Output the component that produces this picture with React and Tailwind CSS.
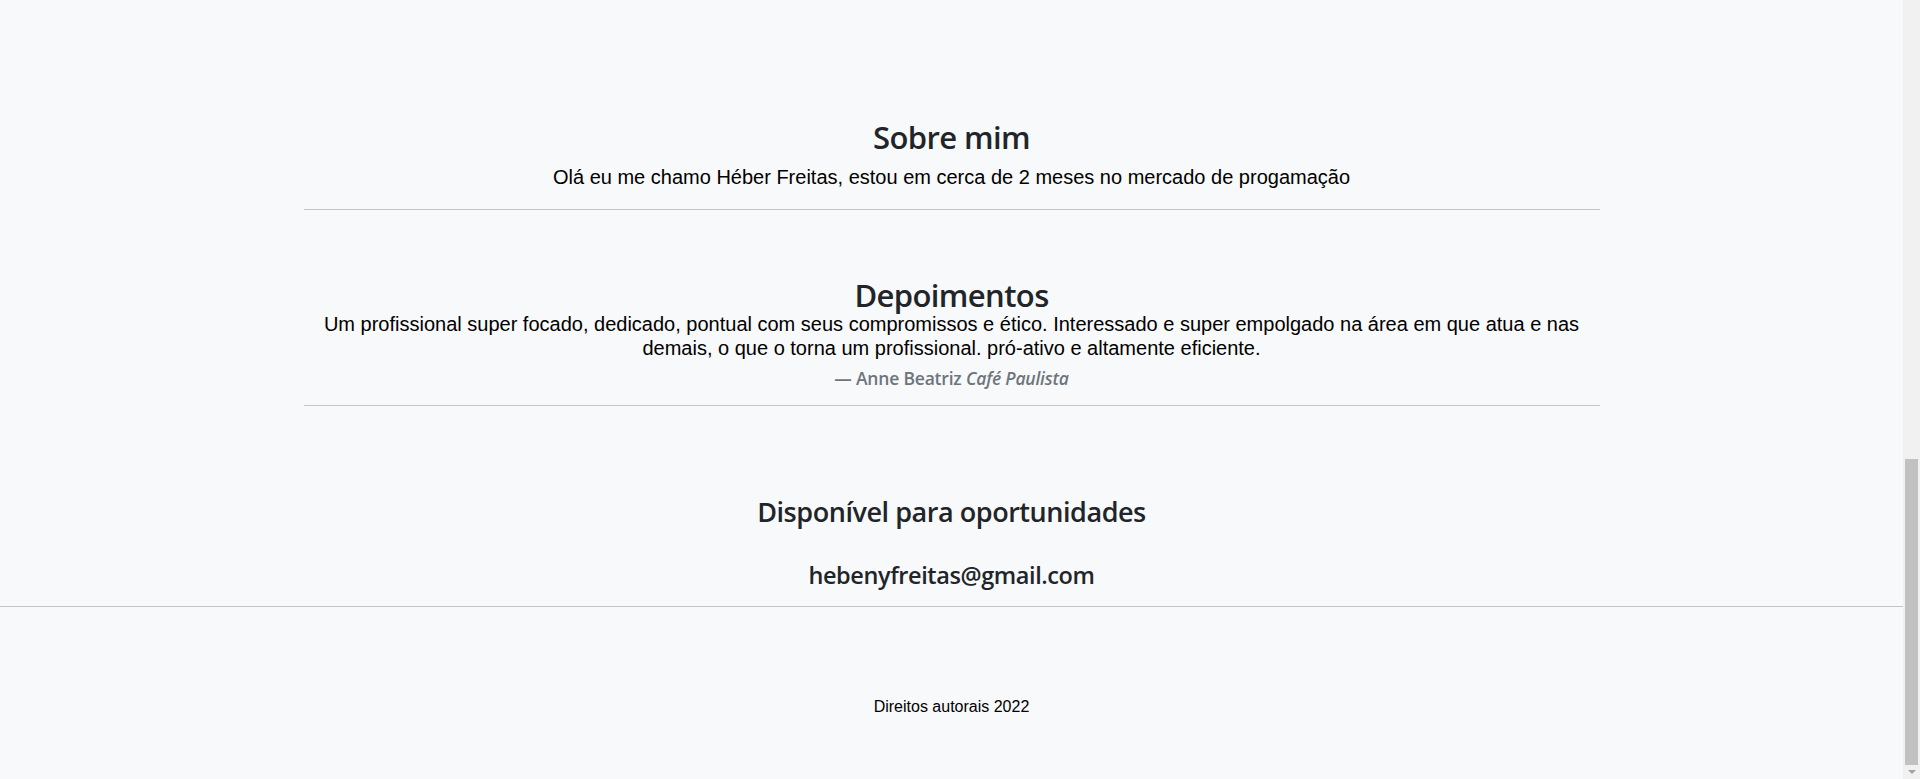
import React from "react";

const heading = "font-['Open_Sans','Noto_Sans',sans-serif] font-semibold text-[#212529] text-center";
const body = "font-['Liberation_Sans',Arial,sans-serif] text-black text-center";

const Divider = ({ full }) => (
  <div className={full ? "h-px bg-[#c4c5c7]" : "mx-auto h-px w-[1296px] bg-[#c4c5c7]"} />
);

const About = () => (
  <section className="mx-auto w-[1296px]">
    <h2 className={`${heading} text-[31px] leading-[38.4px] tracking-[-0.6px]`}>Sobre mim</h2>
    <p className={`${body} mt-[9px] text-[20px] leading-[24px]`}>
      Olá eu me chamo Héber Freitas, estou em cerca de 2 meses no mercado de progamação
    </p>
  </section>
);

const Testimonials = () => (
  <section className="mx-auto w-[1296px]">
    <h2 className={`${heading} mb-[-3px] text-[31px] leading-[38.4px] tracking-[-0.6px]`}>Depoimentos</h2>
    <figure>
      <blockquote className={`${body} text-[20px] leading-[24px]`}>
        Um profissional super focado, dedicado, pontual com seus compromissos e ético. Interessado e super
        empolgado na área em que atua e nas demais, o que o torna um profissional. pró-ativo e altamente eficiente.
      </blockquote>
      <figcaption className="mt-[8px] text-center font-['Open_Sans','Noto_Sans',sans-serif] text-[17.5px] font-semibold leading-[21px] tracking-[-0.2px] text-[#6c757d]">
        — Anne Beatriz <cite className="italic">Café Paulista</cite>
      </figcaption>
    </figure>
  </section>
);

const Contact = () => (
  <section className="mx-auto w-[1296px]">
    <h3 className={`${heading} text-[27px] leading-[33.6px] tracking-[-0.45px]`}>Disponível para oportunidades</h3>
    <h4 className={`${heading} mt-[33px] text-[23.5px] leading-[28.8px] tracking-[-0.4px]`}>hebenyfreitas@gmail.com</h4>
  </section>
);

const Scrollbar = () => (
  <div className="flex w-[17px] flex-col bg-[#f1f1f1]">
    <div className="flex-1" />
    <div className="ml-[2px] h-[306px] w-[13px] bg-[#c1c1c1]" />
    <div className="flex h-[14px] items-center justify-center">
      <svg width="8" height="4" viewBox="0 0 8 4">
        <path d="M0 0h8L4 4z" fill="#a3a3a3" />
      </svg>
    </div>
  </div>
);

export default function App() {
  return (
    <div className="flex h-[779px] overflow-hidden bg-[#f8f9fa]">
      <main className="flex-1 pt-[118px]">
        <About />
        <div className="mt-[20px]">
          <Divider />
        </div>
        <div className="mt-[66px]">
          <Testimonials />
        </div>
        <div className="mt-[16px]">
          <Divider />
        </div>
        <div className="mt-[89px]">
          <Contact />
        </div>
        <div className="mt-[16px]">
          <Divider full />
        </div>
        <footer className={`${body} mt-[88px] text-[16px] leading-[24px]`}>Direitos autorais 2022</footer>
      </main>
      <Scrollbar />
    </div>
  );
}
